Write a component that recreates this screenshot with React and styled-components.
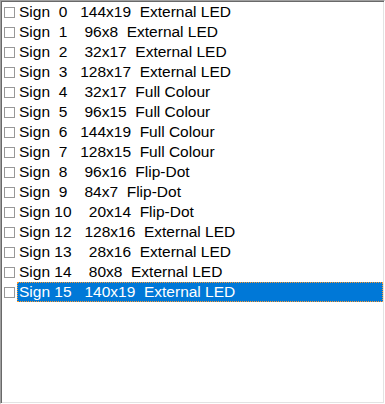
import React from "react";
import styled, { createGlobalStyle } from "styled-components";

const GlobalStyle = createGlobalStyle`
  html, body {
    margin: 0;
    padding: 0;
    background: #fff;
  }
`;

const ListBox = styled.div`
  box-sizing: border-box;
  width: 385px;
  height: 404px;
  background: #fff;
  border: 1px solid;
  border-color: #a0a0a0 #fff #fff #a0a0a0;
  box-shadow: inset 1px 1px 0 #696969, inset -1px -1px 0 #e3e3e3;
  padding: 1px;
  display: flex;
  flex-direction: column;
  font-family: "Liberation Sans", Arial, sans-serif;
  font-size: 15.5px;
  color: #000;
`;

const Row = styled.div`
  display: flex;
  align-items: center;
  height: 20px;
`;

const Check = styled.span`
  box-sizing: border-box;
  width: 11px;
  height: 11px;
  margin-left: 2px;
  margin-right: 2px;
  border: 1px solid #989898;
  background: #fff;
  flex: none;
`;

const Label = styled.span`
  box-sizing: border-box;
  flex: 1;
  height: 20px;
  line-height: 18px;
  padding-left: 1px;
  white-space: pre;
  border: 1px solid transparent;
  ${(p) =>
    p.selected &&
    `
    background: #0078d7;
    color: #fff;
    border: 1px dotted #ff9a2e;
  `}
`;

const signs = [
  [0, "144x19", "External LED"],
  [1, "96x8", "External LED"],
  [2, "32x17", "External LED"],
  [3, "128x17", "External LED"],
  [4, "32x17", "Full Colour"],
  [5, "96x15", "Full Colour"],
  [6, "144x19", "Full Colour"],
  [7, "128x15", "Full Colour"],
  [8, "96x16", "Flip-Dot"],
  [9, "84x7", "Flip-Dot"],
  [10, "20x14", "Flip-Dot"],
  [12, "128x16", "External LED"],
  [13, "28x16", "External LED"],
  [14, "80x8", "External LED"],
  [15, "140x19", "External LED"],
];

// mimics the space-padded strings of the original list
const label = (n, size, type) => {
  const num = n < 10 ? " " + n : String(n);
  const pad = size.split("x")[0].length < 3 ? " " : "";
  return `Sign ${num}   ${pad}${size}  ${type}`;
};

export default function App() {
  return (
    <>
      <GlobalStyle />
      <ListBox>
        {signs.map(([n, size, type]) => (
          <Row key={n}>
            <Check />
            <Label selected={n === 15}>{label(n, size, type)}</Label>
          </Row>
        ))}
      </ListBox>
    </>
  );
}
